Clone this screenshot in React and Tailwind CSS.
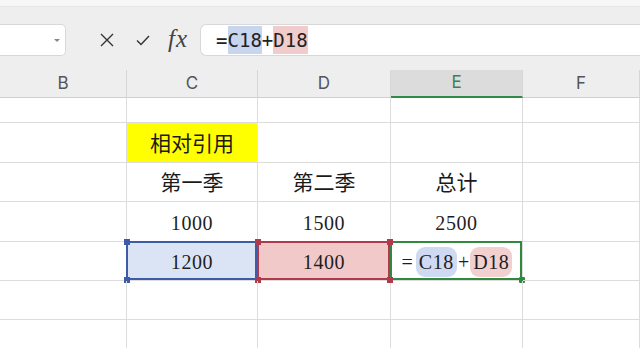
import React from "react";

const cols = "grid grid-cols-[127px_131px_133px_132px_1fr]";
const cjk = { fontFamily: '"Noto Sans CJK SC", "Noto Sans", sans-serif' };
const serif = { fontFamily: '"Liberation Serif", "DejaVu Serif", serif' };

function Cell({ children, className = "" }) {
  return (
    <div className={`relative flex items-center justify-center border-r border-b border-[#dcdcdc] ${className}`}>
      {children}
    </div>
  );
}

function Row({ h, cells }) {
  return (
    <div className={`${cols} ${h}`}>
      {cells.map((c, i) => (
        <React.Fragment key={i}>{c}</React.Fragment>
      ))}
    </div>
  );
}

const Num = ({ v }) => (
  <span className="text-[20px] tracking-[0.6px] text-[#1e1e1e] mt-[2px]" style={serif}>
    {v}
  </span>
);
const Zh = ({ v }) => (
  <span className="text-[21px] text-[#1a1a1a]" style={cjk}>
    {v}
  </span>
);

export default function App() {
  return (
    <div className="w-[640px] h-[348px] overflow-hidden bg-white" style={{ fontFamily: 'Inter, "Noto Sans", sans-serif' }}>
      {/* top strip */}
      <div className="h-[7px] bg-[#f7f7f7] border-b border-[#e6e6e6]"></div>
      {/* formula area */}
      <div className="h-[63px] bg-[#eeeeee] pt-[17px]">
        <div className="flex items-center h-[32px]">
          <div className="relative w-[66px] h-full bg-white border border-l-0 border-[#d8d8d8] rounded-r-[5px]">
            <div className="absolute right-[5px] top-[14px] w-0 h-0 border-l-[3px] border-r-[3px] border-t-[3px] border-l-transparent border-r-transparent border-t-[#888]"></div>
          </div>
          <div className="w-[33px]"></div>
          <svg width="16" height="16" viewBox="0 0 16 16" className="block">
            <path d="M2 2 L14 14 M14 2 L2 14" stroke="#333" strokeWidth="1.4" fill="none" />
          </svg>
          <div className="w-[20px]"></div>
          <svg width="16" height="14" viewBox="0 0 16 14" className="block">
            <path d="M2 7.5 L6 11.5 L14 3" stroke="#333" strokeWidth="1.4" fill="none" />
          </svg>
          <div className="w-[17px]"></div>
          <span
            className="italic text-[25px] leading-none text-[#444] -mt-[4px] tracking-[1px]"
            style={serif}
          >
            fx
          </span>
          <div className="w-[12px]"></div>
          <div
            className="flex-1 h-full bg-white border border-r-0 border-[#d8d8d8] rounded-l-[6px] flex items-center pl-[15px] text-[19px] text-[#222]"
            style={{ fontFamily: '"DejaVu Sans Mono", monospace' }}
          >
            <span>=</span>
            <span className="bg-[#c8d5ef]">C18</span>
            <span>+</span>
            <span className="bg-[#f0cccc]">D18</span>
          </div>
        </div>
      </div>
      {/* column headers */}
      <div className={`${cols} h-[28px] bg-[#eeeeee] border-b border-[#cfcfcf] text-[17px] text-[#555]`}>
        {["B", "C", "D", "E", "F"].map((l) => (
          <div
            key={l}
            className={`flex items-center justify-center border-r border-[#d6d6d6] ${
              l === "E" ? "bg-[#dcdcdc] border-b-2 border-b-[#2f8a44] text-[#3f7f52]" : ""
            }`}
          >
            {l}
          </div>
        ))}
      </div>
      {/* rows */}
      <Row h="h-[25px]" cells={[<Cell />, <Cell />, <Cell />, <Cell />, <Cell />]} />
      <Row
        h="h-[40px]"
        cells={[
          <Cell />,
          <Cell className="bg-[#ffff00] border-r-[#e6e6e6]">
            <Zh v="相对引用" />
          </Cell>,
          <Cell />,
          <Cell />,
          <Cell />,
        ]}
      />
      <Row
        h="h-[39px]"
        cells={[<Cell />, <Cell><Zh v="第一季" /></Cell>, <Cell><Zh v="第二季" /></Cell>, <Cell><Zh v="总计" /></Cell>, <Cell />]}
      />
      <Row
        h="h-[40px]"
        cells={[<Cell />, <Cell><Num v="1000" /></Cell>, <Cell><Num v="1500" /></Cell>, <Cell><Num v="2500" /></Cell>, <Cell />]}
      />
      <Row
        h="h-[39px]"
        cells={[
          <Cell />,
          <Cell className="bg-[#dbe4f5]">
            <div className="absolute -left-[1px] -top-[1px] right-0 bottom-0 border-2 border-[#3d5ba6]"></div>
            <div className="absolute -left-[3px] -top-[3px] w-[6px] h-[6px] bg-[#3d5ba6]"></div>
            <div className="absolute -left-[3px] -bottom-[3px] w-[6px] h-[6px] bg-[#3d5ba6]"></div>
            <Num v="1200" />
          </Cell>,
          <Cell className="bg-[#f1c9c9]">
            <div className="absolute -left-[1px] -top-[1px] right-0 bottom-0 border-2 border-[#b03a4c]"></div>
            <div className="absolute -left-[3px] -top-[3px] w-[6px] h-[6px] bg-[#b03a4c]"></div>
            <div className="absolute -left-[3px] -bottom-[3px] w-[6px] h-[6px] bg-[#b03a4c]"></div>
            <div className="absolute -right-[3px] -top-[3px] w-[6px] h-[6px] bg-[#b03a4c] z-10"></div>
            <div className="absolute -right-[3px] -bottom-[3px] w-[6px] h-[6px] bg-[#b03a4c] z-10"></div>
            <Num v="1400" />
          </Cell>,
          <Cell>
            <div className="absolute -left-[1px] -top-[1px] right-0 bottom-0 border-2 border-[#2f8a3f]"></div>
            <div className="absolute -right-[3px] -bottom-[3px] w-[6px] h-[6px] bg-[#2f8a3f] rounded-[1px]"></div>
            <div
              className="relative flex items-center text-[20px] text-[#1e1e1e] ml-[1px] mt-[2px]"
              style={serif}
            >
              <span className="mr-[3px]">=</span>
              <span className="bg-[#cfdaf2] rounded-[9px] px-[3px] tracking-[0.6px]">C18</span>
              <span className="mx-[1px]">+</span>
              <span className="bg-[#f2d0d0] rounded-[9px] px-[3px] tracking-[0.6px]">D18</span>
            </div>
          </Cell>,
          <Cell />,
        ]}
      />
      <Row h="h-[39px]" cells={[<Cell />, <Cell />, <Cell />, <Cell />, <Cell />]} />
      <Row h="h-[39px]" cells={[<Cell />, <Cell />, <Cell />, <Cell />, <Cell />]} />
    </div>
  );
}
